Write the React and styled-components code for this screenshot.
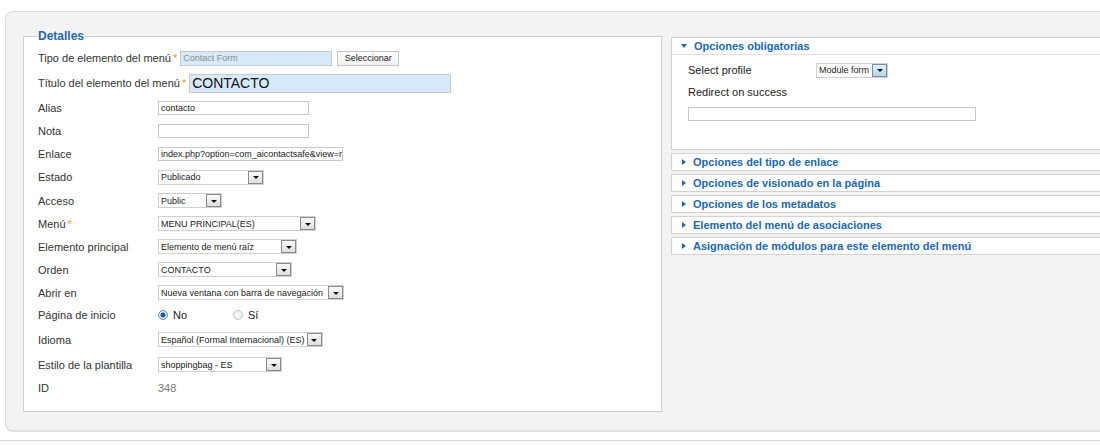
import React from "react";
import styled, { createGlobalStyle } from "styled-components";

const GlobalStyle = createGlobalStyle`
  body {
    margin: 0;
    background: #fff;
    font-family: "Liberation Sans", Arial, sans-serif;
    overflow: hidden;
  }
`;

const Page = styled.div`
  width: 1100px;
  height: 446px;
  overflow: hidden;
  padding-top: 11px;
  box-sizing: border-box;
`;

const Outer = styled.div`
  margin-left: 5px;
  width: 1130px;
  height: 421px;
  box-sizing: border-box;
  background: #f3f3f3;
  border: 1px solid #dcdcdc;
  border-bottom: 2px solid #e2e2e2;
  border-radius: 8px;
  padding: 17px 0 0 17px;
  display: flex;
  align-items: flex-start;
  gap: 9px;
`;

const BottomLine = styled.div`
  margin-top: 8px;
  border-top: 1px solid #dadada;
`;

const Fieldset = styled.fieldset`
  margin: 0;
  width: 639px;
  height: 383px;
  box-sizing: border-box;
  background: #fff;
  border: 1px solid #cfcfcf;
  padding: 3px 0 0 14px;
`;

const Legend = styled.legend`
  padding: 0 1px 0 0;
  font-size: 12px;
  font-weight: bold;
  color: #2068b0;
  line-height: 14px;
`;

const Row = styled.div`
  display: flex;
  align-items: center;
  height: ${(p) => p.$h || 23}px;
`;

const Label = styled.label`
  min-width: 117px;
  margin-right: 3px;
  font-size: 11px;
  color: #333;
  white-space: nowrap;
`;

const Star = styled.span`
  color: #e69a2e;
  margin-left: 2px;
`;

const TextInput = styled.div`
  width: ${(p) => p.$w}px;
  height: ${(p) => p.$hgt || 14}px;
  box-sizing: border-box;
  border: 1px solid #c9c9c9;
  background: ${(p) => (p.$blue ? "#d6eafb" : "#fff")};
  font-size: ${(p) => p.$fs || 9}px;
  color: ${(p) => p.$color || "#222"};
  padding-left: 2px;
  display: flex;
  align-items: center;
  white-space: nowrap;
  overflow: hidden;
  margin-top: ${(p) => p.$mt || 0}px;
`;

const Button = styled.div`
  margin-left: 5px;
  width: 62px;
  height: 15px;
  box-sizing: border-box;
  border: 1px solid #c4c4c4;
  background: linear-gradient(#ffffff, #f1f1f1);
  font-size: 9px;
  color: #222;
  display: flex;
  align-items: center;
  justify-content: center;
`;

const SelectBox = styled.div`
  min-width: ${(p) => p.$w}px;
  height: 15px;
  box-sizing: border-box;
  border: 1px solid #d0d0d0;
  background: #fff;
  display: flex;
  align-items: center;
  font-size: 9px;
  color: #222;
`;

const SelectText = styled.span`
  flex: 1;
  padding: 0 2px;
  white-space: nowrap;
`;

const Arrow = styled.span`
  width: 15px;
  height: 13px;
  flex-shrink: 0;
  box-sizing: border-box;
  border: 1px solid ${(p) => (p.$focus ? "#6f8fb0" : "#8a8a8a")};
  background: ${(p) =>
    p.$focus
      ? "linear-gradient(#e3effa, #b8d3ee)"
      : "linear-gradient(#fafafa, #dedede)"};
  display: flex;
  align-items: center;
  justify-content: center;
  &::after {
    content: "";
    border-left: 3px solid transparent;
    border-right: 3px solid transparent;
    border-top: 3px solid #111;
    margin-top: 1px;
  }
`;

const Select = ({ w, children, focus }) => (
  <SelectBox $w={w}>
    <SelectText>{children}</SelectText>
    <Arrow $focus={focus} />
  </SelectBox>
);

const Radio = styled.span`
  width: 10px;
  height: 10px;
  border-radius: 50%;
  box-sizing: border-box;
  border: 1px solid ${(p) => (p.$on ? "#6a8fb8" : "#c4c4c4")};
  background: ${(p) =>
    p.$on
      ? "radial-gradient(circle, #1e5ea8 0 2.2px, #dbe8f6 2.8px)"
      : "radial-gradient(circle, #fafafa, #e6e6e6)"};
  margin-right: 5px;
`;

const RadioText = styled.span`
  font-size: 11px;
  color: #222;
  width: ${(p) => p.$w}px;
`;

const Value = styled.span`
  font-size: 11px;
  color: #777;
`;

const Side = styled.div`
  margin-top: 8px;
  width: 450px;
  display: flex;
  flex-direction: column;
  gap: 3px;
`;

const Pane = styled.div`
  background: #fff;
  border: 1px solid #d2d2d2;
`;

const PaneHead = styled.div`
  height: 16px;
  display: flex;
  align-items: center;
  padding-left: 9px;
  font-size: 11px;
  font-weight: bold;
  color: #2068b0;
  border-bottom: ${(p) => (p.$open ? "1px solid #e3e3e3" : "none")};
`;

const Tri = styled.span`
  width: 0;
  height: 0;
  margin-right: 7px;
  ${(p) =>
    p.$open
      ? `border-left: 3px solid transparent;
         border-right: 3px solid transparent;
         border-top: 4px solid #2068b0;`
      : `border-top: 3px solid transparent;
         border-bottom: 3px solid transparent;
         border-left: 4px solid #2068b0;
         margin-left: 1px;`}
`;

const PaneBody = styled.div`
  height: 94px;
  padding: 5px 0 0 16px;
  box-sizing: border-box;
`;

const SideRow = styled.div`
  display: flex;
  align-items: center;
  height: ${(p) => p.$h || 20}px;
`;

const SideLabel = styled.span`
  font-size: 11px;
  color: #222;
  width: 128px;
`;

const closedPanes = [
  "Opciones del tipo de enlace",
  "Opciones de visionado en la página",
  "Opciones de los metadatos",
  "Elemento del menú de asociaciones",
  "Asignación de módulos para este elemento del menú",
];

const App = () => {
  return (
    <Page>
      <GlobalStyle />
      <Outer>
        <Fieldset>
          <Legend>Detalles</Legend>
          <Row $h={24}>
            <Label>
              Tipo de elemento del menú<Star>*</Star>
            </Label>
            <TextInput $w={152} $hgt={15} $blue $color="#8a8a8a">
              Contact Form
            </TextInput>
            <Button>Seleccionar</Button>
          </Row>
          <Row $h={26}>
            <Label>
              Título del elemento del menú<Star>*</Star>
            </Label>
            <TextInput $w={262} $hgt={19} $blue $fs={14} $color="#111">
              CONTACTO
            </TextInput>
          </Row>
          <Row $h={24}>
            <Label>Alias</Label>
            <TextInput $w={151}>contacto</TextInput>
          </Row>
          <Row $h={22}>
            <Label>Nota</Label>
            <TextInput $w={151} />
          </Row>
          <Row>
            <Label>Enlace</Label>
            <TextInput $w={185}>
              index.php?option=com_aicontactsafe&amp;view=m
            </TextInput>
          </Row>
          <Row $h={24}>
            <Label>Estado</Label>
            <Select w={106}>Publicado</Select>
          </Row>
          <Row>
            <Label>Acceso</Label>
            <Select w={64}>Public</Select>
          </Row>
          <Row>
            <Label>
              Menú<Star>*</Star>
            </Label>
            <Select w={158}>MENU PRINCIPAL(ES)</Select>
          </Row>
          <Row>
            <Label>Elemento principal</Label>
            <Select w={139}>Elemento de menú raíz</Select>
          </Row>
          <Row>
            <Label>Orden</Label>
            <Select w={134}>CONTACTO</Select>
          </Row>
          <Row>
            <Label>Abrir en</Label>
            <Select w={186}>Nueva ventana con barra de navegación</Select>
          </Row>
          <Row $h={22}>
            <Label>Página de inicio</Label>
            <Radio $on />
            <RadioText $w={60}>No</RadioText>
            <Radio />
            <RadioText>Sí</RadioText>
          </Row>
          <Row $h={27}>
            <Label>Idioma</Label>
            <Select w={161}>Español (Formal Internacional) (ES)</Select>
          </Row>
          <Row>
            <Label>Estilo de la plantilla</Label>
            <Select w={124}>shoppingbag - ES</Select>
          </Row>
          <Row>
            <Label>ID</Label>
            <Value>348</Value>
          </Row>
        </Fieldset>

        <Side>
          <Pane>
            <PaneHead $open>
              <Tri $open />
              Opciones obligatorias
            </PaneHead>
            <PaneBody>
              <SideRow>
                <SideLabel>Select profile</SideLabel>
                <Select w={72} focus>
                  Module form
                </Select>
              </SideRow>
              <SideRow $h={24}>
                <SideLabel>Redirect on success</SideLabel>
              </SideRow>
              <TextInput $w={288} $mt={3} />
            </PaneBody>
          </Pane>
          {closedPanes.map((title) => (
            <Pane key={title}>
              <PaneHead>
                <Tri />
                {title}
              </PaneHead>
            </Pane>
          ))}
        </Side>
      </Outer>
      <BottomLine />
    </Page>
  );
};

export default App;
